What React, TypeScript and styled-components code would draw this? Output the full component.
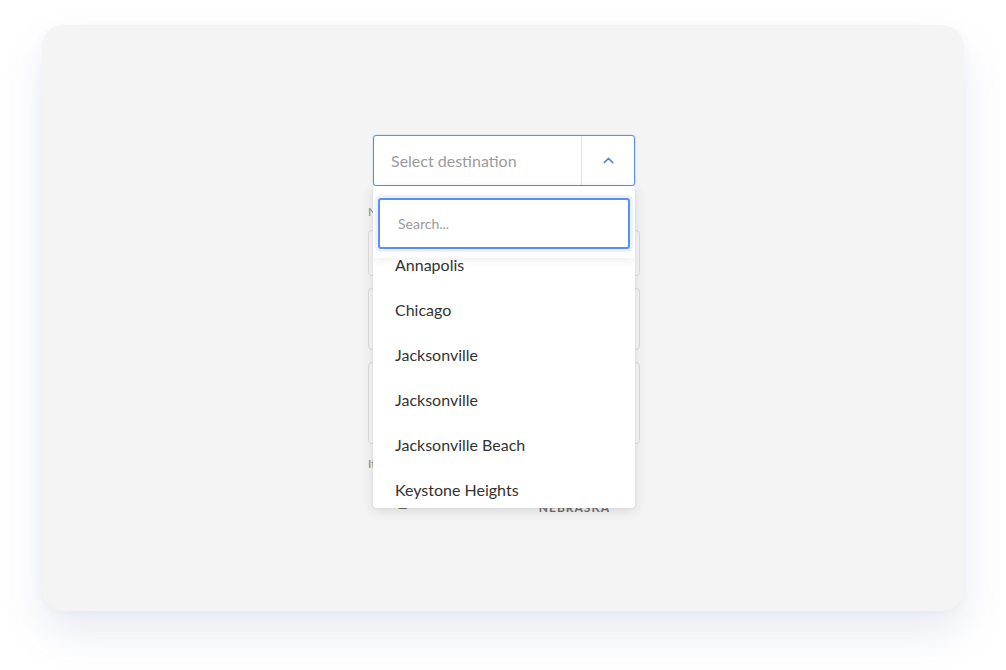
import React from 'react';
import styled, { createGlobalStyle } from 'styled-components';
import { ChevronUp } from 'lucide-react';

const GlobalStyle = createGlobalStyle`
  html, body {
    margin: 0;
    padding: 0;
    background: #ffffff;
    font-family: Lato, "Noto Sans", sans-serif;
  }
`;

const Page = styled.div`
  width: 1006px;
  height: 670px;
  padding: 25px 42px 0;
  box-sizing: border-box;
`;

const Card = styled.div`
  width: 922px;
  height: 586px;
  border-radius: 22px;
  background: #f4f4f5;
  box-shadow: 0 22px 40px rgba(96, 108, 170, 0.13), 0 2px 10px rgba(96, 108, 170, 0.05);
  display: flex;
  justify-content: center;
  padding: 110px 0 0 2px;
  box-sizing: border-box;
`;

const Form = styled.div`
  width: 262px;
  position: relative;
  display: flex;
  flex-direction: column;
`;

// --- faint form fields that sit behind the open menu ---
const Ghost = styled.div`
  display: flex;
  flex-direction: column;
  gap: 12px;
  padding-top: 18px;
  margin: 0 -5px;
`;

const GhostLabel = styled.div`
  font-size: 12px;
  color: #8a8a8a;
  height: 14px;
`;

const GhostInput = styled.div<{ $h: number }>`
  height: ${(p) => p.$h}px;
  border: 1px solid #dcdcdf;
  border-radius: 4px;
  background: #f7f7f8;
`;

const GhostRow = styled.div`
  display: flex;
  justify-content: space-between;
  margin-top: 18px;
  font-size: 12px;
  font-weight: 700;
  letter-spacing: 1px;
  color: #6f6f6f;
  padding: 0 30px;
`;

const Trigger = styled.div`
  height: 51px;
  border: 1.5px solid #5b8ef2;
  border-radius: 3px;
  background: #fff;
  display: flex;
  box-sizing: border-box;
  box-shadow: 0 0 0 1px rgba(91, 142, 242, 0.12);
`;

const Placeholder = styled.div`
  flex: 1;
  display: flex;
  align-items: center;
  padding-left: 17px;
  font-size: 16px;
  color: #9b9b9b;
`;

const Toggle = styled.div`
  width: 52px;
  border-left: 1px solid #e2e2e2;
  display: flex;
  align-items: center;
  justify-content: center;
  color: #4f83ea;
`;

const Menu = styled.div`
  position: absolute;
  top: 51px;
  left: 0;
  right: 0;
  height: 322px;
  background: #fff;
  overflow: hidden;
  border-radius: 0 0 3px 3px;
  box-shadow: 0 3px 12px rgba(0, 0, 0, 0.12), 0 0 1px rgba(0, 0, 0, 0.2);
  z-index: 2;
`;

const SearchBar = styled.div`
  position: absolute;
  top: 0;
  left: 0;
  right: 0;
  height: 72px;
  background: #fff;
  padding: 12px 5px 0 5px;
  box-sizing: border-box;
  box-shadow: 0 4px 8px rgba(0, 0, 0, 0.05);
  z-index: 1;
`;

const SearchInput = styled.div`
  height: 51px;
  border: 2px solid #5b8ef2;
  border-radius: 3px;
  box-sizing: border-box;
  box-shadow: 0 0 0 3px rgba(91, 142, 242, 0.12);
  display: flex;
  align-items: center;
  padding-left: 18px;
  font-size: 14px;
  color: #9b9b9b;
`;

const List = styled.ul`
  list-style: none;
  margin: 0;
  padding: 56px 0 0 0;
`;

const Item = styled.li`
  height: 45px;
  display: flex;
  align-items: center;
  padding-left: 22px;
  font-size: 16px;
  color: #333333;
`;

const cities = [
  'Annapolis',
  'Chicago',
  'Jacksonville',
  'Jacksonville',
  'Jacksonville Beach',
  'Keystone Heights',
];

export default function App() {
  return (
    <>
      <GlobalStyle />
      <Page>
        <Card>
          <Form>
            <Trigger>
              <Placeholder>Select destination</Placeholder>
              <Toggle>
                <ChevronUp size={17} strokeWidth={2} />
              </Toggle>
            </Trigger>
            <Ghost>
              <GhostLabel>Name</GhostLabel>
              <GhostInput $h={44} />
              <GhostInput $h={60} />
              <GhostInput $h={80} />
              <GhostLabel>Itinerary</GhostLabel>
              <GhostRow>
                <span>—</span>
                <span>NEBRASKA</span>
              </GhostRow>
            </Ghost>
            <Menu>
              <SearchBar>
                <SearchInput>Search...</SearchInput>
              </SearchBar>
              <List>
                {cities.map((c, i) => (
                  <Item key={i}>{c}</Item>
                ))}
              </List>
            </Menu>
          </Form>
        </Card>
      </Page>
    </>
  );
}
